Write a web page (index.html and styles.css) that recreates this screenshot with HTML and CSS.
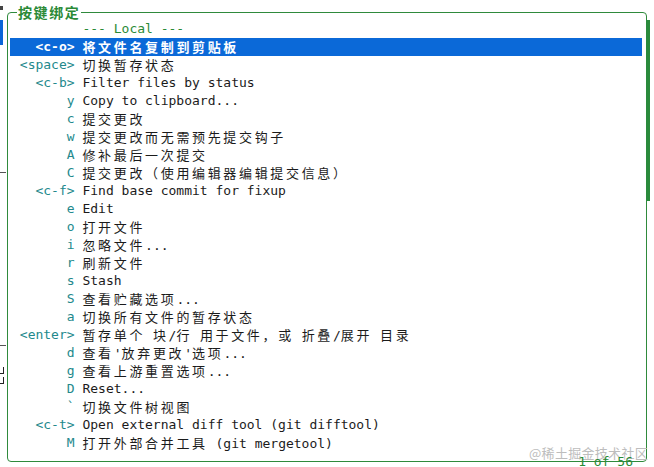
FILE: index.html
```html
<!DOCTYPE html>
<html lang="zh">
<head>
<meta charset="utf-8">
<title>按键绑定</title>
<link rel="stylesheet" href="styles.css">
</head>
<body>
<div class="backdrop">
  <span class="frag frag-top"></span>
  <span class="frag frag-blue"></span>
  <span class="frag frag-line1"></span>
  <span class="frag frag-line2"></span>
  <span class="frag frag-mark1"></span>
  <span class="frag frag-mark2"></span>
</div>
<div class="panel">
  <div class="title"><span class="cjk">按键绑定</span></div>
  <div class="scrollbar"></div>
  <div class="rows">
    <div class="row"><span class="key"></span><span class="desc section">--- Local ---</span></div>
    <div class="row selected"><span class="key">&lt;c-o&gt;</span><span class="desc"><span class="cjk">将文件名复制到剪贴板</span></span></div>
    <div class="row"><span class="key">&lt;space&gt;</span><span class="desc"><span class="cjk">切换暂存状态</span></span></div>
    <div class="row"><span class="key">&lt;c-b&gt;</span><span class="desc">Filter files by status</span></div>
    <div class="row"><span class="key">y</span><span class="desc">Copy to clipboard...</span></div>
    <div class="row"><span class="key">c</span><span class="desc"><span class="cjk">提交更改</span></span></div>
    <div class="row"><span class="key">w</span><span class="desc"><span class="cjk">提交更改而无需预先提交钩子</span></span></div>
    <div class="row"><span class="key">A</span><span class="desc"><span class="cjk">修补最后一次提交</span></span></div>
    <div class="row"><span class="key">C</span><span class="desc"><span class="cjk">提交更改（使用编辑器编辑提交信息）</span></span></div>
    <div class="row"><span class="key">&lt;c-f&gt;</span><span class="desc">Find base commit for fixup</span></div>
    <div class="row"><span class="key">e</span><span class="desc">Edit</span></div>
    <div class="row"><span class="key">o</span><span class="desc"><span class="cjk">打开文件</span></span></div>
    <div class="row"><span class="key">i</span><span class="desc"><span class="cjk">忽略文件</span>...</span></div>
    <div class="row"><span class="key">r</span><span class="desc"><span class="cjk">刷新文件</span></span></div>
    <div class="row"><span class="key">s</span><span class="desc">Stash</span></div>
    <div class="row"><span class="key">S</span><span class="desc"><span class="cjk">查看贮藏选项</span>...</span></div>
    <div class="row"><span class="key">a</span><span class="desc"><span class="cjk">切换所有文件的暂存状态</span></span></div>
    <div class="row"><span class="key">&lt;enter&gt;</span><span class="desc"><span class="cjk">暂存单个</span> <span class="cjk">块</span>/<span class="cjk">行</span> <span class="cjk">用于文件，或</span> <span class="cjk">折叠</span>/<span class="cjk">展开</span> <span class="cjk">目录</span></span></div>
    <div class="row"><span class="key">d</span><span class="desc"><span class="cjk">查看</span>'<span class="cjk">放弃更改</span>'<span class="cjk">选项</span>...</span></div>
    <div class="row"><span class="key">g</span><span class="desc"><span class="cjk">查看上游重置选项</span>...</span></div>
    <div class="row"><span class="key">D</span><span class="desc">Reset...</span></div>
    <div class="row"><span class="key">`</span><span class="desc"><span class="cjk">切换文件树视图</span></span></div>
    <div class="row"><span class="key">&lt;c-t&gt;</span><span class="desc">Open external diff tool (git difftool)</span></div>
    <div class="row"><span class="key">M</span><span class="desc"><span class="cjk">打开外部合并工具</span> (git mergetool)</span></div>
  </div>
  <div class="watermark">@稀土掘金技术社区</div>
  <div class="counter">1 of 56</div>
</div>
</body>
</html>
```

FILE: styles.css
```css
html, body {
  margin: 0;
  padding: 0;
  background: #ffffff;
}

body {
  width: 654px;
  height: 467px;
  overflow: hidden;
  position: relative;
  font-family: "DejaVu Sans Mono", "Liberation Mono", "Noto Sans CJK SC", monospace;
  font-size: 13px;
  color: #1b1b1b;
}

.backdrop {
  position: absolute;
  left: 0;
  top: 0;
  width: 8px;
  height: 467px;
}

.frag {
  position: absolute;
  display: block;
}

.frag-top {
  left: 0;
  top: 6px;
  width: 3px;
  height: 4px;
  background: #444;
}

.frag-blue {
  left: 0;
  top: 20px;
  width: 3px;
  height: 25px;
  background: #0a66d8;
}

.frag-line1 {
  left: 0;
  top: 172px;
  width: 6px;
  height: 1px;
  background: #555;
}

.frag-line2 {
  left: 0;
  top: 345px;
  width: 6px;
  height: 1px;
  background: #555;
}

.frag-mark1,
.frag-mark2 {
  left: 0;
  width: 4px;
  height: 7px;
  border-right: 1px solid #222;
  border-bottom: 1px solid #222;
  box-sizing: border-box;
}

.frag-mark1 { top: 367px; }
.frag-mark2 { top: 377px; }

.panel {
  position: relative;
  margin: 12px 0 0 7px;
  width: 638px;
  height: 448px;
  border: 1px solid #2f8a3c;
  border-radius: 4px;
}

.title {
  position: absolute;
  left: 9px;
  top: -9px;
  padding: 0 1px;
  background: #ffffff;
  color: #2a8a37;
  font-family: "Noto Sans CJK SC", sans-serif;
  font-weight: bold;
  line-height: 17px;
}

.title .cjk {
  font-size: 14px;
  letter-spacing: 1.6px;
}

.scrollbar {
  position: absolute;
  right: -4px;
  top: 7px;
  width: 4px;
  height: 181px;
  background: #2a8a3c;
}

.rows {
  display: flex;
  flex-direction: column;
  padding: 7px 4px 0 2px;
}

.row {
  display: flex;
  height: 18px;
  line-height: 18px;
  white-space: pre;
}

.row.selected {
  background: #0b69d8;
  color: #ffffff;
  font-weight: bold;
}

.key {
  flex: 0 0 auto;
  width: 8ch;
  margin-left: 2px;
  text-align: right;
  color: #23898c;
}

.row.selected .key {
  color: #ffffff;
}

.desc {
  margin-left: 1ch;
}

.section {
  color: #2a8a37;
}

.cjk {
  font-family: "Noto Sans CJK SC", sans-serif;
  letter-spacing: 2.66px;
  font-size: 13px;
}

.watermark {
  position: absolute;
  right: -2px;
  bottom: 1px;
  font-family: "Noto Sans CJK SC", serif;
  font-size: 13px;
  line-height: 14px;
  color: #bdbdbd;
  letter-spacing: 0.3px;
}

.counter {
  position: absolute;
  right: 12px;
  bottom: -8px;
  line-height: 15px;
  color: #2a8a37;
  padding: 0 1px;
}
```
